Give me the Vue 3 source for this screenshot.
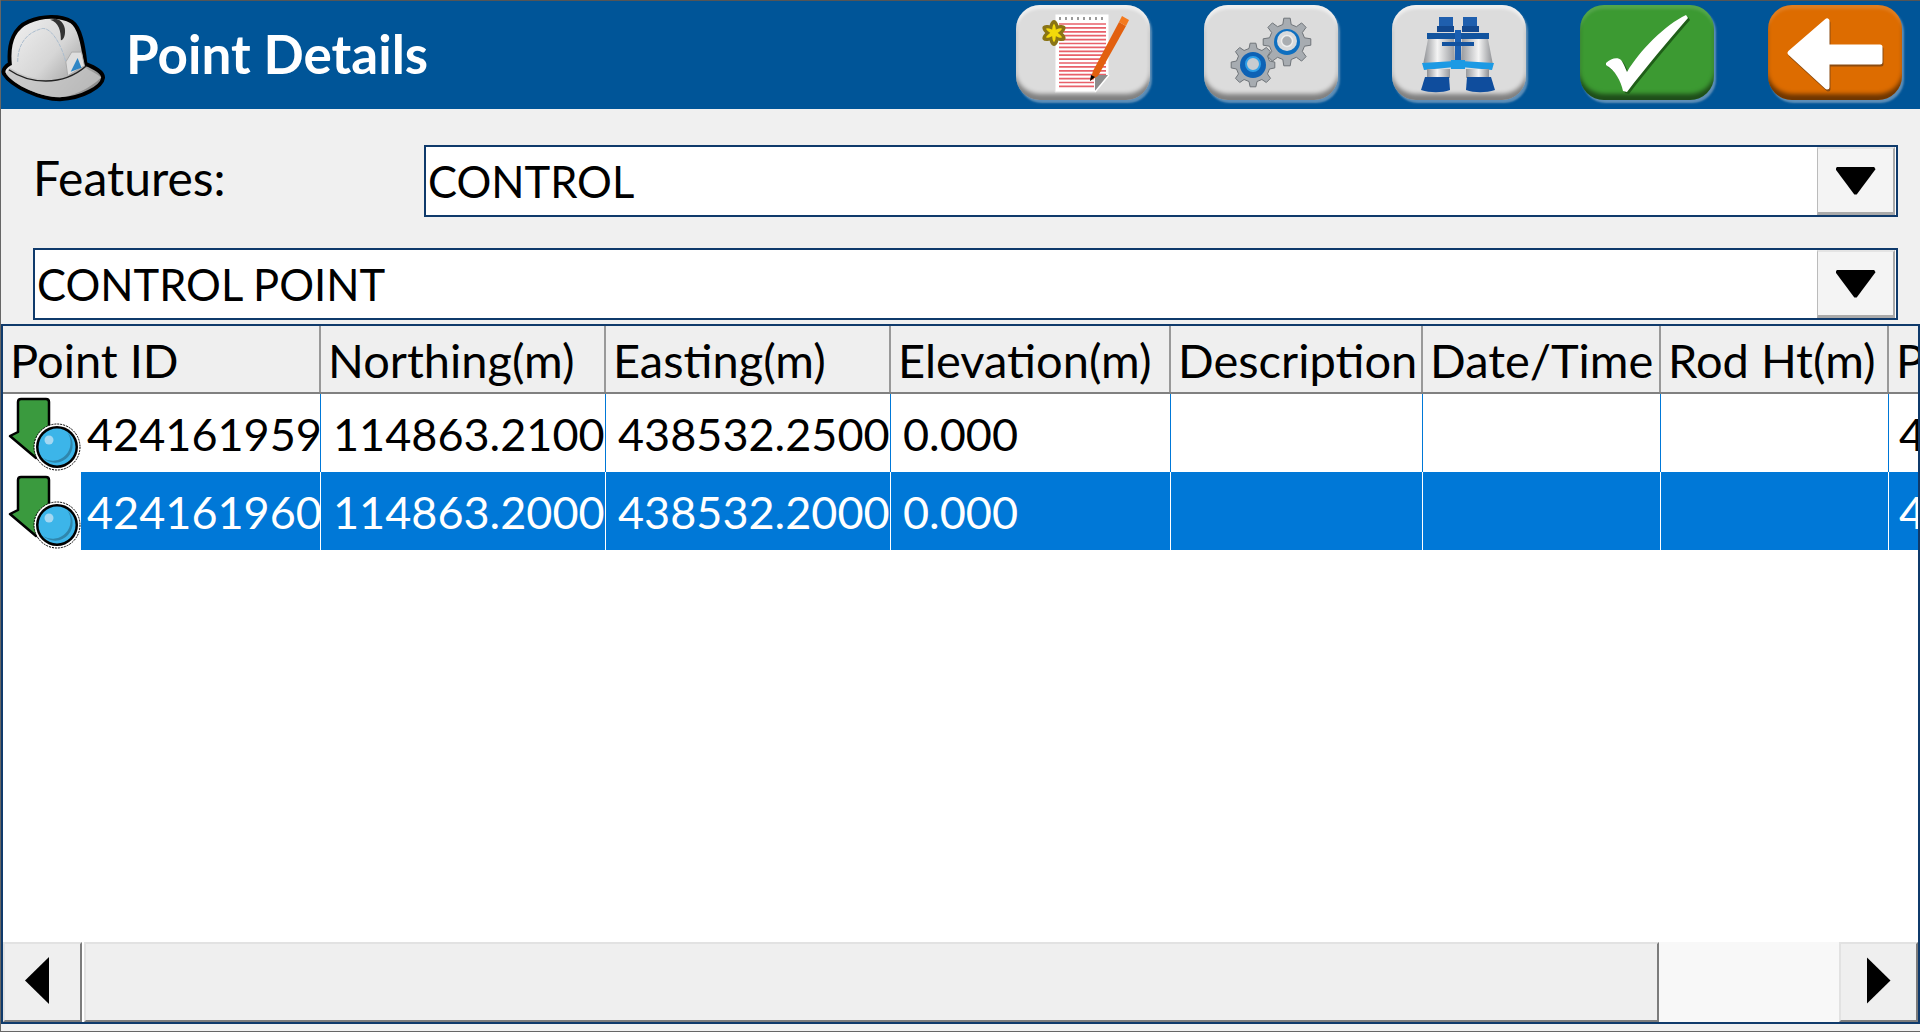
<template>
  <div class="screen">
    <header class="titlebar">
      <svg class="helmet" viewBox="0 0 110 100" width="108" height="100">
        <defs>
          <linearGradient id="helmetFill" x1="0" y1="0" x2="1" y2="0.7">
            <stop offset="0" stop-color="#f4f4f4" />
            <stop offset="0.55" stop-color="#d6d6d6" />
            <stop offset="1" stop-color="#8f8f8f" />
          </linearGradient>
        </defs>
        <path d="M9 58C7 36 14 21 28 15C42 9 60 8 72 15C81 21 84 40 86 58C96 62 104 66 104 72C103 81 84 93 60 94C40 94 11 81 3 68C1 64 5 60 9 58Z" fill="url(#helmetFill)" stroke="#000" stroke-width="4" />
        <path d="M9 62C30 76 62 80 86 62C90 65 98 68 102 72C90 84 70 92 60 92C40 92 14 80 5 68Z" fill="#c4c4c4" opacity="0.8" />
        <path d="M8 64C28 78 62 82 87 60" fill="none" stroke="#222" stroke-width="1.5" />
        <path d="M50 13C59 16 61 24 61 34C64 34 66 28 65 22C64 16 60 13 56 12Z" fill="#333" />
        <path d="M17 56C17 38 26 26 42 22C52 21 62 40 66 56" fill="none" stroke="#a9bccd" stroke-width="1" stroke-dasharray="4 1" />
        <path d="M66 56L72 46H82L85 60L68 70Z" fill="#dedede" stroke="#aaa" stroke-width="1" />
        <path d="M71 66L78 52L82 62Z" fill="#2f86c5" />
      </svg>
      <h1 class="title">Point Details</h1>
      <div class="toolbar">
        <button class="tool">
          <svg viewBox="0 0 134 95">
            <path d="M39 9H93V70L79 87H39Z" fill="#fff" stroke="#ddd" />
            <path v-for="y in noteLines" :key="y" :d="`M43 ${y}H${y > 70 ? 78 : 90}`" stroke="#e8606a" stroke-width="1.7" />
            <path d="M79 87L93 70H79Z" fill="#8c8c8c" />
            <path d="M79 87L93 70" stroke="#fff" stroke-width="1.5" />
            <path d="M44 12V15M50 12V15M56 12V15M62 12V15M68 12V15M74 12V15M80 12V15M86 12V15" stroke="#666" stroke-width="1.3" />
            <g v-for="a in [0, 60, 120]" :key="a" :transform="`rotate(${a} 38 28)`">
              <ellipse cx="38" cy="28" rx="5.5" ry="13" fill="#8a7416" />
            </g>
            <g v-for="a in [0, 60, 120]" :key="a" :transform="`rotate(${a} 38 28)`">
              <ellipse cx="38" cy="28" rx="2" ry="9" fill="#f3d90a" />
            </g>
            <path d="M74 76L77 66L103 17L110 21L82 71Z" fill="#e2600f" />
            <path d="M103 17L106 11L113 15L110 21Z" fill="#f47a1f" />
            <path d="M74 76L75 70L79 72Z" fill="#000" />
          </svg>
        </button>
        <button class="tool">
          <svg viewBox="0 0 134 95">
            <path :d="gears[0]" fill="#a7acb1" stroke="#6f7479" stroke-width="1" />
            <circle cx="83" cy="37" r="13" fill="#0e6fc0" />
            <circle cx="83" cy="36" r="10" fill="#d8dadc" />
            <circle cx="83" cy="36" r="5.5" fill="#a9adb1" stroke="#eee" stroke-width="1.5" />
            <path :d="gears[1]" fill="#a7acb1" stroke="#6f7479" stroke-width="1" />
            <circle cx="49" cy="60" r="13" fill="#0e62b5" />
            <circle cx="49" cy="59" r="7" fill="#c8ccd0" stroke="#2fa0e8" stroke-width="2" />
          </svg>
        </button>
        <button class="tool">
          <svg viewBox="0 0 134 95">
            <defs>
              <linearGradient id="barrel" x1="0" y1="0" x2="1" y2="0">
                <stop offset="0" stop-color="#8e9094" />
                <stop offset="0.45" stop-color="#f4f4f4" />
                <stop offset="1" stop-color="#97999d" />
              </linearGradient>
            </defs>
            <g v-for="flip in binocularSides" :key="flip" :transform="flip">
              <path d="M47 12H61V22H47Z" fill="#1f5fae" />
              <path d="M45 21H62V27H45Z" fill="#12488f" />
              <path d="M35 28H63V34H35Z" fill="#12549f" />
              <path d="M36 34H62L63 58L31 60Z" fill="url(#barrel)" />
              <path d="M30 58L63 56V62L32 65Z" fill="#1c9ae4" />
              <path d="M35 64H58V73H35Z" fill="url(#barrel)" />
              <path d="M33 72H57L58 85C50 88 38 88 29 85Z" fill="#0f4d9d" />
            </g>
            <path d="M63 25H69V61H63Z" fill="#1a5fb2" />
            <path d="M50 37H82V41H50Z" fill="#12529f" />
            <path d="M59 55H73V64H59Z" fill="#1c9ae4" />
          </svg>
        </button>
        <button class="tool tool-ok">
          <svg viewBox="0 0 134 95">
            <path d="M26 58C31 53 38 52 41 55C44 59 46 65 47 67C60 45 85 20 106 10L108 13C88 36 66 62 47 87L43 86C41 76 35 65 26 60Z" fill="#1f5e18" transform="translate(2 2)" />
            <path d="M26 58C31 53 38 52 41 55C44 59 46 65 47 67C60 45 85 20 106 10L108 13C88 36 66 62 47 87L43 86C41 76 35 65 26 60Z" fill="#fff" />
          </svg>
        </button>
        <button class="tool tool-back">
          <svg viewBox="0 0 134 95">
            <path d="M22 48L59 16V42H112V57H59V82Z" fill="#8b4b10" stroke="#8b4b10" stroke-width="5" stroke-linejoin="round" transform="translate(1 2)" />
            <path d="M22 48L59 16V42H112V57H59V82Z" fill="#fff" stroke="#fff" stroke-width="5" stroke-linejoin="round" />
          </svg>
        </button>
      </div>
    </header>

    <section class="filters">
      <div class="filter-row">
        <label class="filter-label">Features:</label>
        <div class="combo">
          <span class="combo-text">CONTROL</span>
          <span class="combo-btn"><i class="caret"></i></span>
        </div>
      </div>
      <div class="combo combo-wide">
        <span class="combo-text">CONTROL POINT</span>
        <span class="combo-btn"><i class="caret"></i></span>
      </div>
    </section>

    <section class="table">
      <div class="grid head">
        <div v-for="col in columns" :key="col" class="th">{{ col }}</div>
      </div>
      <div class="body">
        <div v-for="(p, i) in points" :key="p.id" class="grid tr" :class="{ selected: i === 1 }">
          <div class="td td-id">
            <svg class="marker" viewBox="2 0 78 78" width="78" height="78">
              <path d="M17 8Q17 5 20 5H45Q48 5 48 8V55L35 64L9 42L17 38Z" fill="#3a9a3e" stroke="#000" stroke-width="2.5" stroke-linejoin="round" />
              <circle cx="56" cy="53" r="23" fill="#fff" />
              <circle cx="56" cy="53" r="23" fill="none" stroke="#000" stroke-width="1" stroke-dasharray="2 1" />
              <circle cx="56" cy="53" r="21" fill="#000" />
              <circle cx="56" cy="53" r="18.5" fill="#3cb5e9" />
              <path d="M66 38A18 18 0 0 1 42 64A17 17 0 0 0 66 38Z" fill="#2f86ad" />
              <circle cx="48" cy="46" r="4.5" fill="#a5d8f2" />
            </svg>
            <span>{{ p.id }}</span>
          </div>
          <div class="td">{{ p.north }}</div>
          <div class="td">{{ p.east }}</div>
          <div class="td">{{ p.elev }}</div>
          <div class="td"></div>
          <div class="td"></div>
          <div class="td"></div>
          <div class="td td-last">4</div>
        </div>
      </div>
      <div class="scrollbar">
        <div class="sb-btn sb-left"><i class="arrow-left"></i></div>
        <div class="sb-track"></div>
        <div class="sb-rest"></div>
        <div class="sb-btn"><i class="arrow-right"></i></div>
      </div>
    </section>
  </div>
</template>

<script setup>
const columns = ['Point ID', 'Northing(m)', 'Easting(m)', 'Elevation(m)', 'Description', 'Date/Time', 'Rod Ht(m)', 'P']
const points = [
  { id: '424161959', north: '114863.2100', east: '438532.2500', elev: '0.000' },
  { id: '424161960', north: '114863.2000', east: '438532.2000', elev: '0.000' }
]

const noteLines = Array.from({ length: 17 }, (_, i) => 19 + i * 3.9)
const binocularSides = ['', 'translate(132 0) scale(-1 1)']

// cog outline, tooth by tooth
const gearPath = (cx, cy, outer, inner, teeth) => {
  const step = (Math.PI * 2) / teeth
  let d = ''
  for (let i = 0; i < teeth; i++) {
    const a = i * step
    const pts = [
      [inner, a - step * 0.3],
      [outer, a - step * 0.17],
      [outer, a + step * 0.17],
      [inner, a + step * 0.3]
    ]
    for (const [r, t] of pts) {
      d += `${d ? 'L' : 'M'}${(cx + r * Math.cos(t)).toFixed(1)} ${(cy + r * Math.sin(t)).toFixed(1)}`
    }
  }
  return d + 'Z'
}
const gears = [gearPath(83, 37, 24, 18, 8), gearPath(49, 60, 22, 17, 8)]
</script>

<style>
html, body { margin: 0; background: #f0f0f0; overflow: hidden; }
</style>

<style scoped>
.screen {
  width: 1920px;
  height: 1032px;
  box-sizing: border-box;
  display: flex;
  flex-direction: column;
  background: #f0f0f0;
  border-bottom: 1px solid #666;
  border-left: 1px solid #666;
  font-family: Lato, "Liberation Sans", sans-serif;
  color: #000;
  overflow: hidden;
}
.titlebar {
  height: 108px;
  flex: none;
  border-top: 1px solid #555;
  background: #005598;
  display: flex;
  align-items: center;
  position: relative;
}
.helmet { flex: none; margin-top: 2px; }
.title {
  margin: -4px 0 0 17px;
  font-size: 53px;
  font-weight: 700;
  color: #fff;
}
.toolbar {
  margin-left: auto;
  display: flex;
  gap: 54px;
  padding-right: 18px;
  padding-bottom: 6px;
}
.tool {
  width: 134px;
  height: 95px;
  padding: 0;
  border: 0;
  border-radius: 24px;
  background: #dcdcdc;
  box-shadow: inset 0 4px 3px rgba(255, 255, 255, 0.55), inset 0 -7px 4px -1px rgba(0, 0, 0, 0.42), 2px 3px 2px rgba(170, 190, 210, 0.55);
}
.tool svg { display: block; width: 134px; height: 95px; }
.tool-ok { background: #3c9a32; box-shadow: inset 0 4px 3px rgba(255, 255, 255, 0.12), inset 0 -7px 4px -1px rgba(0, 0, 0, 0.5), 2px 3px 2px rgba(170, 190, 210, 0.55); }
.tool-back { background: #dd6c00; box-shadow: inset 0 4px 3px rgba(255, 255, 255, 0.12), inset 0 -7px 4px -1px rgba(0, 0, 0, 0.5), 2px 3px 2px rgba(170, 190, 210, 0.55); }

.filters {
  flex: none;
  padding: 36px 22px 0 32px;
  display: flex;
  flex-direction: column;
  gap: 31px;
}
.filter-row {
  display: flex;
  align-items: center;
}
.filter-label {
  width: 391px;
  box-sizing: border-box;
  font-size: 48px;
  margin-top: -8px;
}
.combo {
  flex: 1;
  height: 72px;
  box-sizing: border-box;
  border: 2px solid #0f3a6b;
  background: #fff;
  display: flex;
  align-items: center;
  justify-content: space-between;
}
.combo-wide { flex: none; }
.combo-text {
  padding-left: 2px;
  font-size: 43.5px;
}
.combo-btn {
  width: 78px;
  height: 68px;
  margin-right: 1px;
  box-sizing: border-box;
  background: #f4f4f4;
  border-left: 1px solid #bbb;
  border-top: 2px solid #e4e4e4;
  border-right: 2px solid #aaa;
  border-bottom: 3px solid #aaa;
  display: flex;
  align-items: center;
  justify-content: center;
}
.caret {
  width: 40px;
  height: 28px;
  background: #000;
  clip-path: polygon(4% 0, 96% 0, 100% 10%, 53% 100%, 47% 100%, 0 10%);
}

.table {
  flex: 1;
  min-height: 0;
  margin-top: 4px;
  margin-bottom: 7px;
  display: flex;
  flex-direction: column;
  border: 2px solid #0f3a6b;
  background: #fff;
}
.grid {
  display: grid;
  grid-template-columns: 318px 285px 285px 280px 252px 238px 228px 1fr;
}
.head {
  height: 68px;
  flex: none;
  box-sizing: border-box;
  background: #efefef;
  border-bottom: 2px solid #808080;
}
.th {
  box-sizing: border-box;
  padding-left: 7px;
  font-size: 47px;
  line-height: 68px;
  white-space: nowrap;
  overflow: hidden;
  border-right: 2px solid #999;
}
.th:last-child { border-right: 0; }
.body { flex: 1; min-height: 0; }
.tr {
  height: 78px;
  font-size: 45px;
}
.td {
  box-sizing: border-box;
  padding-left: 12px;
  line-height: 81px;
  white-space: nowrap;
  overflow: hidden;
  border-right: 1px solid #0078d7;
}
.td:last-child { border-right: 0; }
.td-id {
  display: flex;
  align-items: flex-start;
  padding-left: 0;
}
.td-id span { padding-left: 6px; }
.marker { flex: none; background: #fff; }
.td-last { padding-left: 10px; }
.selected { background: #0078d7; color: #fff; }
.selected .td { border-right-color: #fff; }

.scrollbar {
  height: 80px;
  flex: none;
  display: flex;
  background: #fff;
}
.sb-btn {
  width: 79px;
  flex: none;
  box-sizing: border-box;
  padding-bottom: 3px;
  background: #efefef;
  border-top: 2px solid #e2e2e2;
  border-left: 2px solid #e2e2e2;
  border-right: 2px solid #7c7c7c;
  border-bottom: 2px solid #7c7c7c;
  display: flex;
  align-items: center;
  justify-content: center;
}
.sb-left { padding-right: 11px; }
.sb-track {
  flex: 1;
  margin-left: 2px;
  box-sizing: border-box;
  background: #efefef;
  border-top: 2px solid #e2e2e2;
  border-left: 2px solid #e2e2e2;
  border-right: 2px solid #7c7c7c;
  border-bottom: 2px solid #7c7c7c;
}
.sb-rest { width: 180px; flex: none; background: #f8f8f8; }
.arrow-left {
  width: 24px;
  height: 47px;
  background: #000;
  clip-path: polygon(100% 0, 100% 100%, 0 50%);
}
.arrow-right {
  width: 24px;
  height: 47px;
  background: #000;
  clip-path: polygon(0 0, 100% 50%, 0 100%);
}
</style>
